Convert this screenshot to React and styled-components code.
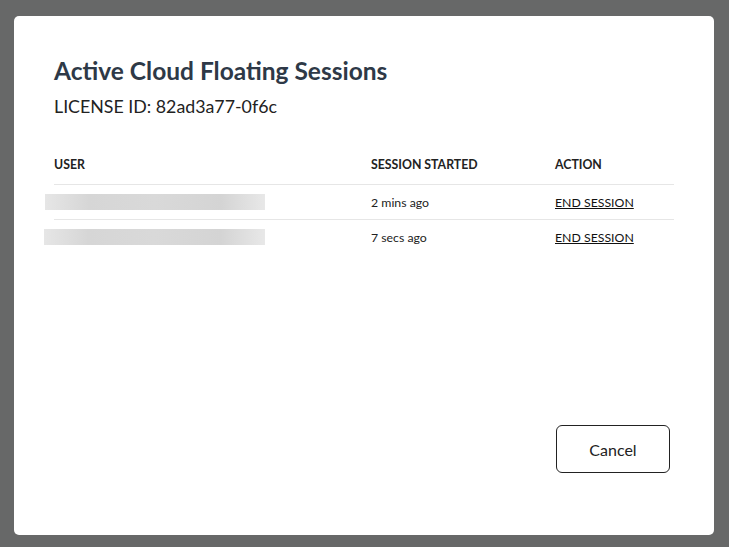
import styled, { createGlobalStyle } from 'styled-components';

const GlobalStyle = createGlobalStyle`
  html, body {
    margin: 0;
    padding: 0;
    height: 100%;
  }
  body {
    background: #676868;
    font-family: Lato, "Open Sans", sans-serif;
  }
`;

const Overlay = styled.div`
  width: 729px;
  height: 547px;
  padding: 16px 15px 12px 14px;
  box-sizing: border-box;
  display: flex;
`;

const Modal = styled.div`
  flex: 1;
  background: #fff;
  border-radius: 5px;
  padding: 37px 40px 62px 40px;
  display: flex;
  flex-direction: column;
`;

const Title = styled.h2`
  margin: 0;
  font-size: 24.5px;
  font-weight: 700;
  color: #2e3947;
  line-height: 36px;
`;

const Subtitle = styled.div`
  margin-top: 5px;
  font-size: 17.8px;
  color: #222;
  line-height: 24px;
`;

const Table = styled.div`
  margin-top: 27px;
  display: flex;
  flex-direction: column;
`;

const Row = styled.div`
  display: grid;
  grid-template-columns: 317px 184px 1fr;
  align-items: center;
  height: ${(p) => (p.head ? '39px' : '34px')};
  border-bottom: ${(p) => (p.last ? 'none' : '1px solid #e6e6e6')};
  font-size: 12.3px;
  font-weight: ${(p) => (p.head ? 700 : 400)};
  color: #222;
`;

const Blurred = styled.div`
  margin-left: ${(p) => p.offset - 10}px;
  width: ${(p) => 221 - p.offset}px;
  height: 16px;
  background: linear-gradient(90deg, #e6e6e6 0%, #d6d6d6 20%, #d9d9d9 50%, #d4d4d4 80%, #e8e8e8 100%);
  filter: blur(0.6px);
`;

const EndLink = styled.a`
  color: #111;
  text-decoration: underline;
  cursor: pointer;
`;

const Footer = styled.div`
  margin-top: auto;
  padding-right: 4px;
  display: flex;
  justify-content: flex-end;
`;

const CancelButton = styled.button`
  width: 114px;
  height: 48px;
  background: #fff;
  border: 1px solid #222;
  border-radius: 6px;
  font-family: Lato, "Open Sans", sans-serif;
  font-size: 16px;
  color: #222;
  cursor: pointer;
`;

const sessions = [
  { started: '2 mins ago', offset: 1 },
  { started: '7 secs ago', offset: 0 },
];

export default function App() {
  return (
    <>
      <GlobalStyle />
      <Overlay>
        <Modal>
          <Title>Active Cloud Floating Sessions</Title>
          <Subtitle>LICENSE ID: 82ad3a77-0f6c</Subtitle>
          <Table>
            <Row head>
              <span>USER</span>
              <span>SESSION STARTED</span>
              <span>ACTION</span>
            </Row>
            {sessions.map((s, i) => (
              <Row key={i} last={i === sessions.length - 1}>
                <Blurred offset={s.offset} />
                <span>{s.started}</span>
                <span>
                  <EndLink>END SESSION</EndLink>
                </span>
              </Row>
            ))}
          </Table>
          <Footer>
            <CancelButton>Cancel</CancelButton>
          </Footer>
        </Modal>
      </Overlay>
    </>
  );
}
